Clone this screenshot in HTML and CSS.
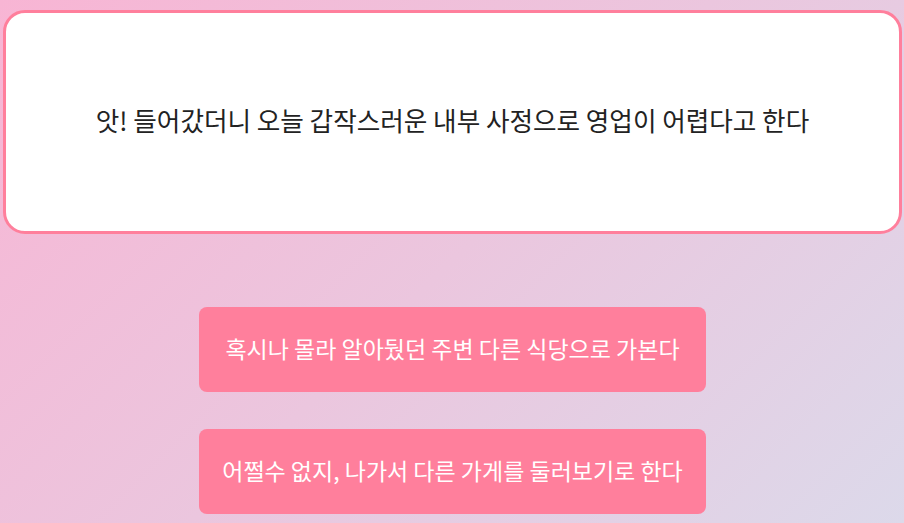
FILE: index.html
```html
<html>
    <head>
        <title>Story</title>
        <meta name="viewport" content="width=device-width, initial-scale=1.0">
        <link rel="stylesheet" href="styles.css">
    </head>
    <body>
        <div class="scene">
            <div class="story">
                <p>앗! 들어갔더니 오늘 갑작스러운 내부 사정으로 영업이 어렵다고 한다</p>
            </div>
            <div class="choices">
                <button class="choice">혹시나 몰라 알아뒀던 주변 다른 식당으로 가본다</button>
                <button class="choice">어쩔수 없지, 나가서 다른 가게를 둘러보기로 한다</button>
            </div>
        </div>
    </body>
</html>
```

FILE: styles.css
```css
html, body {margin:0;height:100%;}
body {
    background: linear-gradient(135deg, #f8b5d4 0%, #ebc6de 50%, #dcd9ea 100%);
    font-family: "Noto Sans CJK KR", "Noto Sans", sans-serif;
}
.scene {padding:10px 2px 0 3px;}
.story {
    height: 212px;
    background: #fff;
    border: 3px solid #ff7f9c;
    border-radius: 22px;
    display: flex;
    align-items: center;
    justify-content: center;
    padding-bottom: 6px;
}
.story p {margin:0;font-size:25.6px;color:#222;}
.choices {
    display: flex;
    flex-direction: column;
    align-items: center;
    gap: 37px;
    margin-top: 73px;
}
.choice {
    width: 507px;
    height: 85px;
    border: none;
    border-radius: 8px;
    background: #ff7f9c;
    color: #fff;
    font-family: inherit;
    font-size: 23px;
    padding: 0 0 3px;
}
```
